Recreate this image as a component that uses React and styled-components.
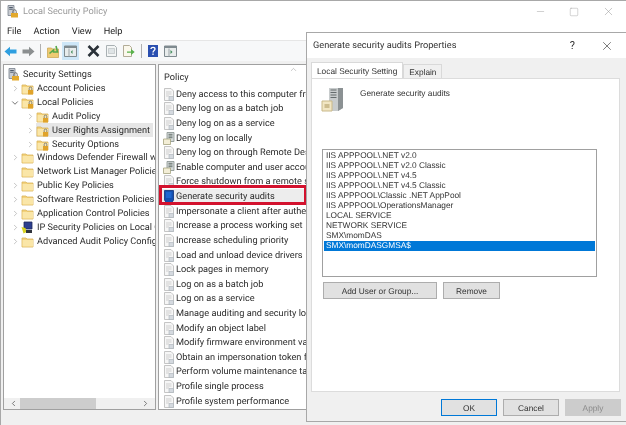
import styled, { createGlobalStyle } from 'styled-components';
import { ChevronRight, ChevronDown, ChevronUp, ChevronLeft, Minus, Square, X } from 'lucide-react';

const Global = createGlobalStyle`
    html, body {
        margin: 0;
        padding: 0;
        background: #fff;
        text-rendering: geometricPrecision;
    }
    svg {
        flex: none;
    }
`;

const treeItems = [
    { label: 'Account Policies', level: 1, arrow: 'right', icon: 'locked' },
    { label: 'Local Policies', level: 1, arrow: 'down', icon: 'locked' },
    { label: 'Audit Policy', level: 2, arrow: 'right', icon: 'locked' },
    { label: 'User Rights Assignment', level: 2, arrow: 'right', icon: 'locked', selected: true },
    { label: 'Security Options', level: 2, arrow: 'right', icon: 'locked' },
    { label: 'Windows Defender Firewall with Advanced Security', level: 1, arrow: 'right', icon: 'folder' },
    { label: 'Network List Manager Policies', level: 1, icon: 'folder' },
    { label: 'Public Key Policies', level: 1, arrow: 'right', icon: 'folder' },
    { label: 'Software Restriction Policies', level: 1, arrow: 'right', icon: 'folder' },
    { label: 'Application Control Policies', level: 1, arrow: 'right', icon: 'folder' },
    { label: 'IP Security Policies on Local Computer', level: 1, arrow: 'right', icon: 'ipsec' },
    { label: 'Advanced Audit Policy Configuration', level: 1, arrow: 'right', icon: 'folder' },
];

const policies = [
    { label: 'Deny access to this computer from the network' },
    { label: 'Deny log on as a batch job' },
    { label: 'Deny log on as a service' },
    { label: 'Deny log on locally', icon: 'machine' },
    { label: 'Deny log on through Remote Desktop Services' },
    { label: 'Enable computer and user accounts to be trusted', icon: 'machine' },
    { label: 'Force shutdown from a remote system' },
    { label: 'Generate security audits', icon: 'audit', marked: true },
    { label: 'Impersonate a client after authentication' },
    { label: 'Increase a process working set' },
    { label: 'Increase scheduling priority' },
    { label: 'Load and unload device drivers' },
    { label: 'Lock pages in memory' },
    { label: 'Log on as a batch job' },
    { label: 'Log on as a service' },
    { label: 'Manage auditing and security log' },
    { label: 'Modify an object label' },
    { label: 'Modify firmware environment values' },
    { label: 'Obtain an impersonation token for another user' },
    { label: 'Perform volume maintenance tasks' },
    { label: 'Profile single process' },
    { label: 'Profile system performance' },
];

const accounts = [
    'IIS APPPOOL\\.NET v2.0',
    'IIS APPPOOL\\.NET v2.0 Classic',
    'IIS APPPOOL\\.NET v4.5',
    'IIS APPPOOL\\.NET v4.5 Classic',
    'IIS APPPOOL\\Classic .NET AppPool',
    'IIS APPPOOL\\OperationsManager',
    'LOCAL SERVICE',
    'NETWORK SERVICE',
    'SMX\\momDAS',
    'SMX\\momDASGMSA$',
];

const FolderIcon = ({ locked }) => (
    <svg width="13" height="13" viewBox="0 0 13 13">
        <path d="M1 3h4l1 1h6v8H1z" fill="#f3d27c" stroke="#d9b45c" strokeWidth="0.8" />
        <path d="M1.5 5h10.5v6.5H1.5z" fill="#fae6a8" />
        {locked && <path d="M7 8h5v4.5H7z" fill="#e0a32a" />}
        {locked && <path d="M8.2 8V6.4a1.3 1.3 0 0 1 2.6 0V8" fill="none" stroke="#777" strokeWidth="0.9" />}
    </svg>
);

const ServerLockIcon = () => (
    <svg width="12" height="13" viewBox="0 0 12 13">
        <path d="M1 0.5h6v10H1z" fill="#c9ccd2" stroke="#77808c" strokeWidth="0.8" />
        <path d="M2.2 2.5h3.6M2.2 4.2h3.6" stroke="#4e5a6a" />
        <path d="M4 8h7v4.5H4z" fill="#e3a92c" />
        <path d="M5.8 8V6.4a1.7 1.7 0 0 1 3.4 0V8" fill="none" stroke="#6b6b6b" />
    </svg>
);

const IpsecIcon = () => (
    <svg width="13" height="13" viewBox="0 0 13 13">
        <path d="M3 1h8v7H3z" fill="#2c3f8f" stroke="#20285c" strokeWidth="0.8" />
        <path d="M0.5 6l4 1 1 4-3 1.5z" fill="#d8d21e" />
        <path d="M5 9h6v3H5z" fill="#30343c" />
    </svg>
);

const PageIcon = () => (
    <svg width="12" height="13" viewBox="0 0 12 13">
        <path d="M1.5 0.5h6.5l2.5 2.5v9.5h-9z" fill="#f6f6f6" stroke="#b8b8b8" strokeWidth="0.8" />
        <path d="M3 4h5.5M3 6h5.5M3 8h3" stroke="#cfcfcf" />
        <path d="M6 8.5h4.5v4H6z" fill="#d4d9df" stroke="#aab1b8" strokeWidth="0.6" />
    </svg>
);

const MachineIcon = () => (
    <svg width="12" height="13" viewBox="0 0 12 13">
        <path d="M4 0.5h7v9H4z" fill="#d5dadb" stroke="#858f8c" strokeWidth="0.8" />
        <path d="M5.5 2.3h4M5.5 4h4M5.5 5.7h4" stroke="#69746f" />
        <path d="M0.5 7h7v5.5h-7z" fill="#f3eed6" stroke="#a5a27e" strokeWidth="0.8" />
    </svg>
);

const AuditIcon = () => (
    <svg width="12" height="13" viewBox="0 0 12 13">
        <path d="M1.5 0.5h9v9.5l-1.5 2.5H3L1.5 10z" fill="#1450b0" stroke="#0c2f78" strokeWidth="0.8" />
        <path d="M3 2h5.5v6H3z" fill="#1f66cf" />
    </svg>
);

const ArrowIcon = ({ color, flip }) => (
    <svg width="13" height="11" viewBox="0 0 13 11" style={flip ? { transform: 'scaleX(-1)' } : undefined}>
        <path d="M0.5 5.5L6 0.8v2.7h6.5v4H6v2.7z" fill={color} />
    </svg>
);

const UpFolderIcon = () => (
    <svg width="12" height="13" viewBox="0 0 12 13">
        <path d="M0.5 3h4l1 1h6v8.5h-11z" fill="#eecb72" stroke="#c9a24a" strokeWidth="0.7" />
        <path d="M2.5 8.5l4-3.5v2h4L9 1" fill="none" stroke="#54a84a" strokeWidth="1.6" />
    </svg>
);

const PaneIcon = ({ active }) => (
    <svg width="13" height="12" viewBox="0 0 13 12">
        <path d="M0.5 1h12v10.5H0.5z" fill="#e8ecec" stroke="#7f8a8f" />
        <path d="M0.5 1h12v2h-12z" fill="#7f8a8f" />
        <path d="M5 3.5v8" stroke="#9aa3a7" />
        <path d={active ? 'M8.5 5L6.8 7l1.7 2z' : 'M6.5 5l2 2-2 2z'} fill="#3e8a58" />
    </svg>
);

const DeleteIcon = () => (
    <svg width="13" height="12" viewBox="0 0 13 12">
        <path d="M1.5 1l10 10M11.5 1l-10 10" stroke="#2a3138" strokeWidth="2.6" />
    </svg>
);

const SheetIcon = () => (
    <svg width="11" height="12" viewBox="0 0 11 12">
        <path d="M0.5 0.5h8l2 2v9h-10z" fill="#f4f6f6" stroke="#a9b0b3" />
        <path d="M2.5 3.5h6v5h-6z" fill="#dfe4e6" stroke="#b5babd" strokeWidth="0.6" />
    </svg>
);

const ExportIcon = () => (
    <svg width="12" height="12" viewBox="0 0 12 12">
        <path d="M0.5 0.5h6l2 2v9h-8z" fill="#fbf8ec" stroke="#b2ac97" />
        <path d="M4 6.5h4V4l3.7 3L8 10V7.8H4z" fill="#58b04a" />
    </svg>
);

const HelpIcon = () => (
    <svg width="10" height="12" viewBox="0 0 10 12">
        <rect width="10" height="12" fill="#2a4fb0" />
        <path d="M3 4c0-2.3 4-2.3 4 0 0 1.5-2 1.5-2 3.4M5 8.5v1.6" fill="none" stroke="#fff" strokeWidth="1.3" />
    </svg>
);

const ServerBigIcon = () => (
    <svg width="24" height="25" viewBox="0 0 24 25">
        <path d="M8 1h14v20l-5 3H8z" fill="#c8cccd" />
        <path d="M17 1h5v20l-5 3z" fill="#8b9193" />
        <path d="M9.5 3h6M9.5 5.5h6M9.5 8h6M9.5 10.5h6" stroke="#646b6d" strokeWidth="1.2" />
        <path d="M1 14h10v10H1z" fill="#f1e6c3" stroke="#c9b98a" />
        <path d="M3.5 17h5v4h-5z" fill="#cdbd8f" />
    </svg>
);

const treeIcons = {
    locked: <FolderIcon locked />,
    folder: <FolderIcon />,
    ipsec: <IpsecIcon />,
};

const policyIcons = {
    machine: <MachineIcon />,
    audit: <AuditIcon />,
};

const App = () => {
    return (
        <>
            <Global />
            <Desktop>
                <MainWindow>
                    <TitleBar>
                        <TitleIcon><ServerLockIcon /></TitleIcon>
                        <TitleText>Local Security Policy</TitleText>
                        <WindowButtons>
                            <Minus size={11} strokeWidth={1} />
                            <Square size={10} strokeWidth={1} />
                            <X size={13} strokeWidth={1} />
                        </WindowButtons>
                    </TitleBar>
                    <MenuBar>
                        <span>File</span>
                        <span>Action</span>
                        <span>View</span>
                        <span>Help</span>
                    </MenuBar>
                    <Toolbar>
                        <ToolButton><ArrowIcon color="#2f9fe0" /></ToolButton>
                        <ToolButton><ArrowIcon color="#8b8f90" flip /></ToolButton>
                        <ToolSeparator />
                        <ToolButton><UpFolderIcon /></ToolButton>
                        <ToolButton $active><PaneIcon active /></ToolButton>
                        <ToolSpacer />
                        <ToolButton><DeleteIcon /></ToolButton>
                        <ToolButton><SheetIcon /></ToolButton>
                        <ToolButton><ExportIcon /></ToolButton>
                        <ToolSeparator />
                        <ToolButton><HelpIcon /></ToolButton>
                        <ToolButton><PaneIcon /></ToolButton>
                    </Toolbar>
                    <Panes>
                        <TreePane>
                            <TreeList>
                                <TreeRoot>
                                    <ServerLockIcon />
                                    <span>Security Settings</span>
                                </TreeRoot>
                                {treeItems.map((item) => (
                                    <TreeRow key={item.label} $level={item.level}>
                                        <TreeArrow>
                                            {item.arrow === 'right' && <ChevronRight size={9} strokeWidth={1.5} />}
                                            {item.arrow === 'down' && <ChevronDown size={10} strokeWidth={1.8} color="#444" />}
                                        </TreeArrow>
                                        <TreeLabel $selected={item.selected}>
                                            {treeIcons[item.icon]}
                                            <span>{item.label}</span>
                                        </TreeLabel>
                                    </TreeRow>
                                ))}
                            </TreeList>
                            <ScrollBar>
                                <ChevronLeft size={9} strokeWidth={2} color="#555" />
                                <ScrollTrack><ScrollThumb /></ScrollTrack>
                                <ChevronRight size={9} strokeWidth={2} color="#555" />
                            </ScrollBar>
                        </TreePane>
                        <ListPane>
                            <ColumnHeader>
                                <span>Policy</span>
                                <SortMark><ChevronUp size={9} strokeWidth={1.2} color="#888" /></SortMark>
                            </ColumnHeader>
                            {policies.map((policy) => (
                                <PolicyRow key={policy.label} $marked={policy.marked}>
                                    {policyIcons[policy.icon] || <PageIcon />}
                                    <span>{policy.label}</span>
                                </PolicyRow>
                            ))}
                        </ListPane>
                    </Panes>
                    <StatusBar />
                </MainWindow>
                <Dialog>
                    <DialogTitle>
                        <span>Generate security audits Properties</span>
                        <DialogControls>
                            <span>?</span>
                            <X size={14} strokeWidth={1.1} />
                        </DialogControls>
                    </DialogTitle>
                    <TabStrip>
                        <Tab $active>Local Security Setting</Tab>
                        <Tab>Explain</Tab>
                    </TabStrip>
                    <TabPanel>
                        <PolicyHeading>
                            <ServerBigIcon />
                            <span>Generate security audits</span>
                        </PolicyHeading>
                        <AccountList>
                            {accounts.map((account, i) => (
                                <AccountRow key={account} $selected={i === accounts.length - 1}>{account}</AccountRow>
                            ))}
                        </AccountList>
                        <ListActions>
                            <ActionButton $width={114}>Add User or Group...</ActionButton>
                            <ActionButton $width={57}>Remove</ActionButton>
                        </ListActions>
                    </TabPanel>
                    <DialogFooter>
                        <ActionButton $width={56} $primary>OK</ActionButton>
                        <ActionButton $width={56}>Cancel</ActionButton>
                        <ActionButton $width={56} $disabled>Apply</ActionButton>
                    </DialogFooter>
                </Dialog>
            </Desktop>
        </>
    )
}

const Desktop = styled.div`
    position: relative;
    width: 626px;
    height: 425px;
    overflow: hidden;
    filter: blur(0.3px);
`;
const MainWindow = styled.div`
    display: flex;
    flex-direction: column;
    box-sizing: border-box;
    width: 626px;
    height: 425px;
    border-top: 1px solid #a8a8a8;
    border-left: 1px solid #a8a8a8;
    background: #fff;
    font-family: Roboto, sans-serif;
    font-size: 9.2px;
    color: #2b2b2b;
`;
const TitleBar = styled.div`
    display: flex;
    align-items: center;
    height: 21px;
    padding-left: 6px;
`;
const TitleIcon = styled.div`
    display: flex;
    margin-right: 4px;
`;
const TitleText = styled.span`
    color: #9a9a9a;
`;
const WindowButtons = styled.div`
    display: flex;
    align-items: center;
    gap: 23px;
    margin-left: auto;
    padding-right: 11px;
    color: #999;
`;
const MenuBar = styled.div`
    display: flex;
    align-items: center;
    gap: 12px;
    height: 18px;
    padding-left: 6px;
    color: #222;
`;
const Toolbar = styled.div`
    display: flex;
    align-items: center;
    height: 20px;
    padding-left: 1px;
    background: #f7f8f9;
    border-top: 1px solid #e6e6e6;
`;
const ToolButton = styled.div`
    display: flex;
    align-items: center;
    justify-content: center;
    width: 17.5px;
    height: 18px;
    background: ${props => props.$active ? "#cde6f7" : "transparent"};
`;
const ToolSeparator = styled.div`
    width: 1px;
    height: 14px;
    margin: 0 3px;
    background: #b0b0b0;
`;
const ToolSpacer = styled.div`
    width: 6px;
`;
const Panes = styled.div`
    display: flex;
    gap: 2px;
    flex: 1;
    min-height: 0;
    padding: 3px 0 0 2px;
    background: #f0f0f0;
`;
const TreePane = styled.div`
    display: flex;
    flex-direction: column;
    box-sizing: border-box;
    width: 153px;
    border: 1px solid #a0a0a0;
    background: #fff;
`;
const TreeList = styled.div`
    flex: 1;
    min-height: 0;
    overflow: hidden;
    padding: 3px 0 0 4px;
`;
const TreeRoot = styled.div`
    display: flex;
    align-items: center;
    gap: 3px;
    height: 13.85px;
    white-space: nowrap;
`;
const TreeRow = styled.div`
    display: flex;
    align-items: center;
    height: 13.85px;
    padding-left: ${props => (props.$level - 1) * 15 + 1}px;
    white-space: nowrap;
`;
const TreeArrow = styled.div`
    display: flex;
    align-items: center;
    justify-content: center;
    width: 12px;
    flex: none;
    color: #999;
`;
const TreeLabel = styled.div`
    display: flex;
    align-items: center;
    gap: 3px;
    height: 14px;
    padding-right: 3px;
    background: ${props => props.$selected ? "#e6e6e6" : "transparent"};
`;
const ScrollBar = styled.div`
    display: flex;
    align-items: center;
    justify-content: space-between;
    height: 11px;
    padding: 0 5px;
    background: #f0f0f0;
`;
const ScrollTrack = styled.div`
    flex: 1;
    height: 11px;
    margin: 0 2px;
`;
const ScrollThumb = styled.div`
    width: 76px;
    height: 11px;
    background: #cdcdcd;
`;
const ListPane = styled.div`
    flex: 1;
    min-width: 0;
    overflow: hidden;
    box-sizing: border-box;
    border: 1px solid #a0a0a0;
    background: #fff;
`;
const ColumnHeader = styled.div`
    position: relative;
    display: flex;
    align-items: center;
    height: 22px;
    padding: 2px 0 0 5px;
    box-sizing: border-box;
`;
const SortMark = styled.div`
    position: absolute;
    left: 130px;
    top: 0;
`;
const PolicyRow = styled.div`
    position: relative;
    display: flex;
    align-items: center;
    gap: 1px;
    height: 14.62px;
    padding-left: 4px;
    white-space: nowrap;
    background: ${props => props.$marked ? "#ededed" : "transparent"};
    &::after {
        content: "";
        display: ${props => props.$marked ? "block" : "none"};
        position: absolute;
        left: 0;
        top: -4px;
        width: 148px;
        height: 20px;
        box-sizing: border-box;
        border: 3px solid #d3122e;
    }
`;
const StatusBar = styled.div`
    height: 15px;
    background: #f0f0f0;
`;
const Dialog = styled.div`
    position: absolute;
    left: 306px;
    top: 32px;
    display: flex;
    flex-direction: column;
    box-sizing: border-box;
    width: 320px;
    height: 390px;
    border: 1px solid #a8a8a8;
    border-right: none;
    background: #f0f0f0;
    font-family: "Liberation Sans", Arial, sans-serif;
    font-size: 8.3px;
    color: #333;
`;
const DialogTitle = styled.div`
    display: flex;
    align-items: center;
    justify-content: space-between;
    height: 25px;
    padding: 0 12px 0 6px;
    background: #fff;
    font-family: Roboto, sans-serif;
    font-size: 9.2px;
`;
const DialogControls = styled.div`
    display: flex;
    align-items: center;
    gap: 25px;
    font-size: 11px;
`;
const TabStrip = styled.div`
    display: flex;
    align-items: flex-end;
    height: 20px;
    padding-left: 4px;
`;
const Tab = styled.div`
    display: flex;
    align-items: center;
    justify-content: center;
    box-sizing: border-box;
    padding: 0 5px;
    height: ${props => props.$active ? "16px" : "14px"};
    background: ${props => props.$active ? "#fff" : "#f0f0f0"};
    border: 1px solid #d9d9d9;
    border-bottom: none;
`;
const TabPanel = styled.div`
    display: flex;
    flex-direction: column;
    box-sizing: border-box;
    height: 314px;
    margin: 0 6px 0 4px;
    padding: 8px 0 0 9px;
    background: #fff;
    border: 1px solid #dcdcdc;
`;
const PolicyHeading = styled.div`
    display: flex;
    gap: 15px;
    height: 62px;
    & > span {
        padding-top: 1px;
    }
`;
const AccountList = styled.div`
    box-sizing: border-box;
    width: 275px;
    height: 128px;
    margin-left: 1px;
    padding: 1px;
    border: 1px solid #a0a0a0;
`;
const AccountRow = styled.div`
    height: 10px;
    line-height: 9px;
    padding-left: 2px;
    background: ${props => props.$selected ? "#0078d7" : "transparent"};
    color: ${props => props.$selected ? "#fff" : "#333"};
`;
const ListActions = styled.div`
    display: flex;
    gap: 6px;
    margin-top: 5px;
    padding-left: 2px;
`;
const ActionButton = styled.div`
    display: flex;
    align-items: center;
    justify-content: center;
    box-sizing: border-box;
    width: ${props => props.$width}px;
    height: 17px;
    border: 1px solid ${props => props.$primary ? "#0078d7" : props.$disabled ? "#cccccc" : "#adadad"};
    background: ${props => props.$disabled ? "#cccccc" : "#e1e1e1"};
    color: ${props => props.$disabled ? "#8a8a8a" : "#333"};
`;
const DialogFooter = styled.div`
    display: flex;
    justify-content: flex-end;
    gap: 6px;
    padding: 7px 5px 0 0;
`;

export default App;
